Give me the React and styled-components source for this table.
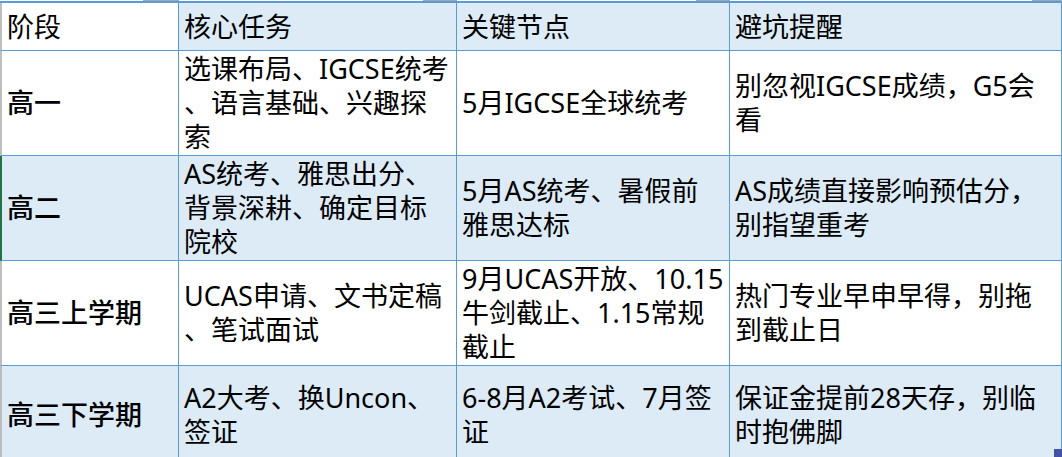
import React from 'react';
import styled, { createGlobalStyle } from 'styled-components';

const GlobalStyle = createGlobalStyle`
	html, body {
		margin: 0;
		padding: 0;
		overflow: hidden;
		background: #ffffff;
	}
	body {
		font-family: 'Noto Sans', 'Noto Sans CJK SC', sans-serif;
		color: #000000;
	}
`;

const COLS = '179px 278px 273px 1fr';
const BLUE = '#5b9bd5';
const FILL = '#ddebf7';

const Sheet = styled.div`
	position: relative;
	width: 1062px;
	height: 457px;
	overflow: hidden;
`;

const TopStrip = styled.div`
	display: grid;
	grid-template-columns: ${COLS};
	height: 1px;
`;

const StripSeg = styled.div`
	display: flex;
	justify-content: flex-end;
	span {
		width: ${(p) => p.$w || 34}px;
		height: 1px;
		background: #a6a6a6;
	}
`;

const Table = styled.div`
	display: flex;
	flex-direction: column;
	border-top: 2px solid ${BLUE};
`;

const Row = styled.div`
	display: grid;
	grid-template-columns: ${COLS};
	height: ${(p) => p.$h}px;
	flex-shrink: 0;
`;

const Cell = styled.div`
	display: flex;
	align-items: center;
	padding: 0 5px;
	border-right: 1px solid ${BLUE};
	border-bottom: 1px solid ${BLUE};
	background: ${(p) => (p.$fill ? FILL : '#ffffff')};
	font-size: 27px;
	line-height: 34px;
	font-weight: ${(p) => (p.$bold ? 500 : 400)};
	white-space: nowrap;
`;

const StageCell = styled(Cell)`
	border-left: 2px solid ${(p) => (p.$active ? '#217346' : '#bdbdbd')};
`;

const Lines = styled.div`
	display: flex;
	flex-direction: column;
`;

const Handle = styled.div`
	position: absolute;
	right: 0;
	bottom: 0;
	width: 8px;
	height: 8px;
	background: #4452a6;
`;

const header = ['核心任务', '关键节点', '避坑提醒'];

const rows = [
	{
		stage: '高一',
		h: 105,
		cells: [
			['选课布局、IGCSE统考', '、语言基础、兴趣探', '索'],
			['5月IGCSE全球统考'],
			['别忽视IGCSE成绩，G5会', '看'],
		],
	},
	{
		stage: '高二',
		h: 105,
		fill: true,
		active: true,
		cells: [
			['AS统考、雅思出分、', '背景深耕、确定目标', '院校'],
			['5月AS统考、暑假前', '雅思达标'],
			['AS成绩直接影响预估分，', '别指望重考'],
		],
	},
	{
		stage: '高三上学期',
		h: 105,
		cells: [
			['UCAS申请、文书定稿', '、笔试面试'],
			['9月UCAS开放、10.15', '牛剑截止、1.15常规', '截止'],
			['热门专业早申早得，别拖', '到截止日'],
		],
	},
	{
		stage: '高三下学期',
		h: 98,
		fill: true,
		cells: [
			['A2大考、换Uncon、', '签证'],
			['6-8月A2考试、7月签', '证'],
			['保证金提前28天存，别临', '时抱佛脚'],
		],
	},
];

const App = () => {
	return (
		<Sheet>
			<GlobalStyle />
			<TopStrip>
				<StripSeg $w={36}>
					<span />
				</StripSeg>
				<StripSeg>
					<span />
				</StripSeg>
				<StripSeg>
					<span />
				</StripSeg>
				<StripSeg $w={30}>
					<span />
				</StripSeg>
			</TopStrip>
			<Table>
				<Row $h={48}>
					<StageCell>阶段</StageCell>
					{header.map((h) => (
						<Cell key={h} $fill>
							{h}
						</Cell>
					))}
				</Row>
				{rows.map((r) => (
					<Row key={r.stage} $h={r.h}>
						<StageCell $fill={r.fill} $active={r.active} $bold>
							{r.stage}
						</StageCell>
						{r.cells.map((lines, i) => (
							<Cell key={i} $fill={r.fill}>
								<Lines>
									{lines.map((l) => (
										<span key={l}>{l}</span>
									))}
								</Lines>
							</Cell>
						))}
					</Row>
				))}
			</Table>
			<Handle />
		</Sheet>
	);
};

export default App;
